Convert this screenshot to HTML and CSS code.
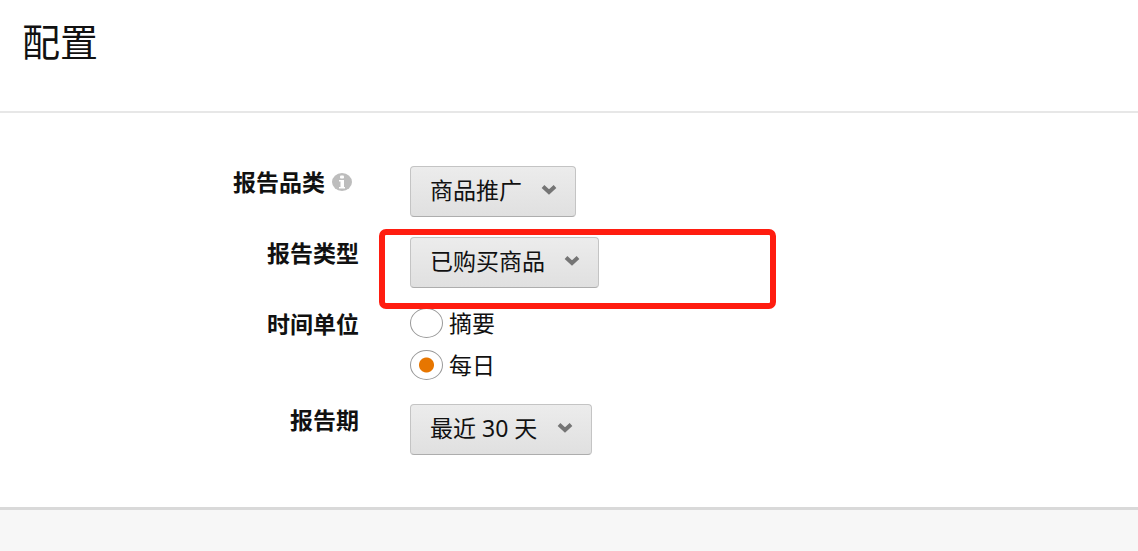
FILE: index.html
```
<!DOCTYPE html>
<html lang="zh-CN">
<head>
    <meta charset="UTF-8" />
    <meta name="viewport" content="width=device-width, initial-scale=1.0" />
    <title>配置</title>
    <link rel="stylesheet" href="styles.css">
</head>
<body>
    <div class="panel">
        <header class="panel-header">
            <h1>配置</h1>
        </header>

        <form class="config-form">
            <!-- Report category -->
            <div class="form-row">
                <div class="form-label with-info">
                    <label for="category">报告品类</label>
                    <svg class="info-icon" viewBox="0 0 20 18" aria-hidden="true">
                        <ellipse cx="10" cy="9" rx="10" ry="9" fill="#bdbdbd" />
                        <rect x="8" y="2.5" width="4" height="3" rx="1" fill="#fff" />
                        <path d="M7 7h5v7h1v1.5H7V14h1.500V8.500H7z" fill="#fff" />
                    </svg>
                </div>
                <div class="select-box">
                    <select id="category">
                        <option>商品推广</option>
                    </select>
                    <svg class="chevron" viewBox="0 0 16 11" aria-hidden="true">
                        <path d="M2 2.500l6 5.500 6-5.500" />
                    </svg>
                </div>
            </div>

            <!-- Report type -->
            <div class="form-row">
                <div class="form-label">
                    <label for="reportType">报告类型</label>
                </div>
                <div class="select-box">
                    <select id="reportType">
                        <option>已购买商品</option>
                    </select>
                    <svg class="chevron" viewBox="0 0 16 11" aria-hidden="true">
                        <path d="M2 2.500l6 5.500 6-5.500" />
                    </svg>
                    <span class="highlight"></span>
                </div>
            </div>

            <!-- Time unit -->
            <div class="form-row" role="radiogroup" aria-labelledby="unitLabel">
                <div class="form-label">
                    <span id="unitLabel">时间单位</span>
                </div>
                <div class="radio-list">
                    <label class="radio">
                        <input type="radio" name="unit" value="summary">
                        摘要
                    </label>
                    <label class="radio">
                        <input type="radio" name="unit" value="daily" checked>
                        每日
                    </label>
                </div>
            </div>

            <!-- Report period -->
            <div class="form-row">
                <div class="form-label">
                    <label for="period">报告期</label>
                </div>
                <div class="select-box">
                    <select id="period">
                        <option>最近 30 天</option>
                    </select>
                    <svg class="chevron" viewBox="0 0 16 11" aria-hidden="true">
                        <path d="M2 2.500l6 5.500 6-5.500" />
                    </svg>
                </div>
            </div>
        </form>
    </div>
</body>
</html>
```
FILE: styles.css
```
* {
    box-sizing: border-box;
}

body {
    margin: 0;
    background: #f7f7f7;
    color: #111;
    font-family: "Noto Sans", "Noto Sans CJK SC", sans-serif;
    font-size: 23px;
    line-height: 32px;
}

.panel {
    background: #fff;
    border-bottom: 3px solid #d9d9d9;
}

.panel-header {
    padding: 14px 22px 42px;
    border-bottom: 2px solid #e7e7e7;
}

h1 {
    margin: 0;
    font-size: 38px;
    font-weight: 400;
    line-height: 55px;
}

.config-form {
    display: flex;
    flex-direction: column;
    gap: 20px;
    padding: 53px 22px 52px 0;
}

.form-row {
    display: flex;
    gap: 51px;
}

.form-label {
    display: flex;
    justify-content: flex-end;
    width: 359px;
    font-weight: 700;
}

.with-info {
    align-items: center;
    align-self: flex-start;
    gap: 7px;
    padding-right: 7px;
}

.info-icon {
    width: 20px;
    height: 18px;
}

.select-box {
    position: relative;
}

select {
    appearance: none;
    display: block;
    height: 51px;
    margin: 0;
    padding: 0 53px 3px 19px;
    border: 1px solid #c4c4c4;
    border-bottom-color: #adadad;
    border-radius: 4px;
    background: linear-gradient(#ececec, #e0e0e0);
    color: #111;
    font: inherit;
}

.chevron {
    position: absolute;
    top: 18px;
    right: 19px;
    width: 16px;
    height: 11px;
    fill: none;
    stroke: #757575;
    stroke-width: 4;
    pointer-events: none;
}

/* Red frame around the report type */
.highlight {
    position: absolute;
    top: -8px;
    left: -31px;
    width: 397px;
    height: 80px;
    border: 6px solid #ff1d10;
    border-radius: 7px;
    pointer-events: none;
}

.radio-list {
    display: flex;
    flex-direction: column;
    gap: 12px;
    padding-bottom: 4px;
}

.radio {
    display: flex;
    align-items: center;
    gap: 6px;
    height: 30px;
}

input[type="radio"] {
    appearance: none;
    width: 33px;
    height: 30px;
    margin: 0;
    border: 1px solid #999;
    border-radius: 50%;
    background: #fff;
}

input[type="radio"]:checked {
    background: radial-gradient(circle, #e77600 7px, #fff 8px);
}
```
